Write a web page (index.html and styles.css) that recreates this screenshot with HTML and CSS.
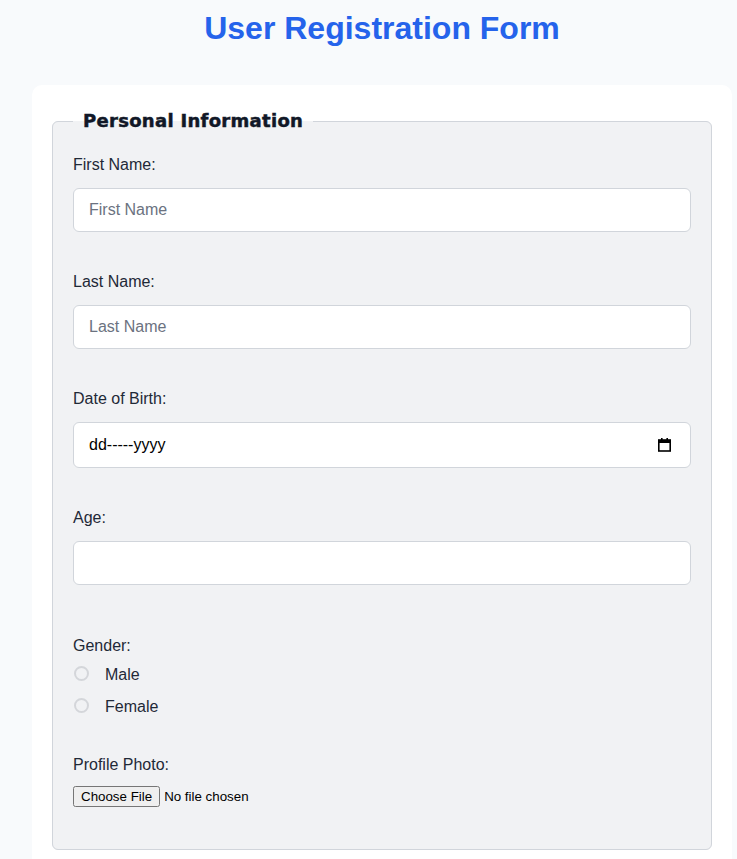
FILE: index.html
```html
<!DOCTYPE html>
<html lang="en">
<head>
<meta charset="utf-8">
<title>User Registration Form</title>
<link rel="stylesheet" href="styles.css">
</head>
<body>
<h1 class="title">User Registration Form</h1>
<div class="card">
  <form class="form">
    <fieldset class="section">
      <legend class="legend">Personal Information</legend>
      <div class="group">
        <label class="label" for="fn">First Name:</label>
        <input class="field" id="fn" type="text" placeholder="First Name">
      </div>
      <div class="group">
        <label class="label" for="ln">Last Name:</label>
        <input class="field" id="ln" type="text" placeholder="Last Name">
      </div>
      <div class="group">
        <label class="label" for="dob">Date of Birth:</label>
        <div class="field date-field">
          <input class="date-input" id="dob" type="text" value="dd-----yyyy" readonly>
          <svg class="cal" width="13" height="14" viewBox="0 0 13 14" aria-hidden="true">
            <rect x="3" y="0" width="1.6" height="3" fill="#000"/>
            <rect x="8.4" y="0" width="1.6" height="3" fill="#000"/>
            <rect x="0.8" y="2" width="11.4" height="11" fill="none" stroke="#000" stroke-width="1.6"/>
            <rect x="0.8" y="2" width="11.4" height="3" fill="#000"/>
          </svg>
        </div>
      </div>
      <div class="group group-age">
        <label class="label" for="age">Age:</label>
        <input class="field" id="age" type="number">
      </div>
      <div class="group group-gender">
        <span class="label">Gender:</span>
        <div class="radios">
          <label class="radio-row"><input class="radio" type="radio" name="g" value="m"><span>Male</span></label>
          <label class="radio-row"><input class="radio" type="radio" name="g" value="f"><span>Female</span></label>
        </div>
      </div>
      <div class="group group-last">
        <label class="label label-photo" for="photo">Profile Photo:</label>
        <input class="file" id="photo" type="file">
      </div>
    </fieldset>
  </form>
</div>
</body>
</html>
```

FILE: styles.css
```css
* { box-sizing: border-box; }

html, body {
  margin: 0;
  padding: 0;
  background: #f8fafc;
}

body {
  font-family: "Liberation Sans", Arial, sans-serif;
  color: #1f2937;
  padding-bottom: 40px;
}

.title {
  margin: 10px 0 38px 32px;
  width: 700px;
  text-align: center;
  font-size: 32px;
  line-height: 37px;
  font-weight: bold;
  color: #2563eb;
}

.card {
  margin-left: 32px;
  width: 700px;
  background: #ffffff;
  border-radius: 10px;
  padding: 20px;
}

.form { margin: 0; }

.section {
  margin: 0;
  border: 1px solid #d1d5db;
  border-radius: 6px;
  background: #f1f2f4;
  padding: 18px 20px 42px;
}

.legend {
  font-family: "DejaVu Sans", Verdana, sans-serif;
  font-weight: bold;
  font-size: 18px;
  line-height: 22px;
  letter-spacing: 0.3px;
  -webkit-text-stroke: 0.5px #111827;
  padding: 5px 10px;
  color: #111827;
}

.group {
  display: flex;
  flex-direction: column;
  align-items: flex-start;
  margin-bottom: 40px;
}

.group-age { margin-bottom: 51px; }
.group-gender { margin-bottom: 37px; }
.group-last { margin-bottom: 0; }

.label {
  display: block;
  font-size: 16px;
  line-height: 20px;
  margin-bottom: 13px;
  color: #1f2937;
}

.label-photo { margin-bottom: 11px; }

.field {
  width: 100%;
  height: 44px;
  padding: 12px 15px;
  font-family: "Liberation Sans", Arial, sans-serif;
  font-size: 16px;
  border: 1px solid #d1d5db;
  border-radius: 6px;
  background: #ffffff;
  color: #111827;
  outline: none;
}

.field::placeholder { color: #6b7280; }

.date-field {
  display: flex;
  align-items: center;
  height: 46px;
  padding: 0 19px 0 15px;
}

.date-input {
  flex: 1;
  border: none;
  outline: none;
  background: transparent;
  padding: 0;
  font-family: "Liberation Sans", Arial, sans-serif;
  font-size: 16px;
  color: #000000;
}

.cal { flex: none; }

.radios {
  display: flex;
  flex-direction: column;
  gap: 10px;
  margin-top: -5px;
}

.radio-row {
  display: flex;
  align-items: center;
  height: 22px;
  font-size: 16px;
  color: #1f2937;
}

.radio {
  appearance: none;
  -webkit-appearance: none;
  width: 15px;
  height: 15px;
  margin: -4px 16px 0 1px;
  border: 2px solid #d4d6da;
  border-radius: 50%;
  background: #f1f2f4;
}

.file {
  font-family: "Liberation Sans", Arial, sans-serif;
  font-size: 13.33px;
  color: #000;
}
```
